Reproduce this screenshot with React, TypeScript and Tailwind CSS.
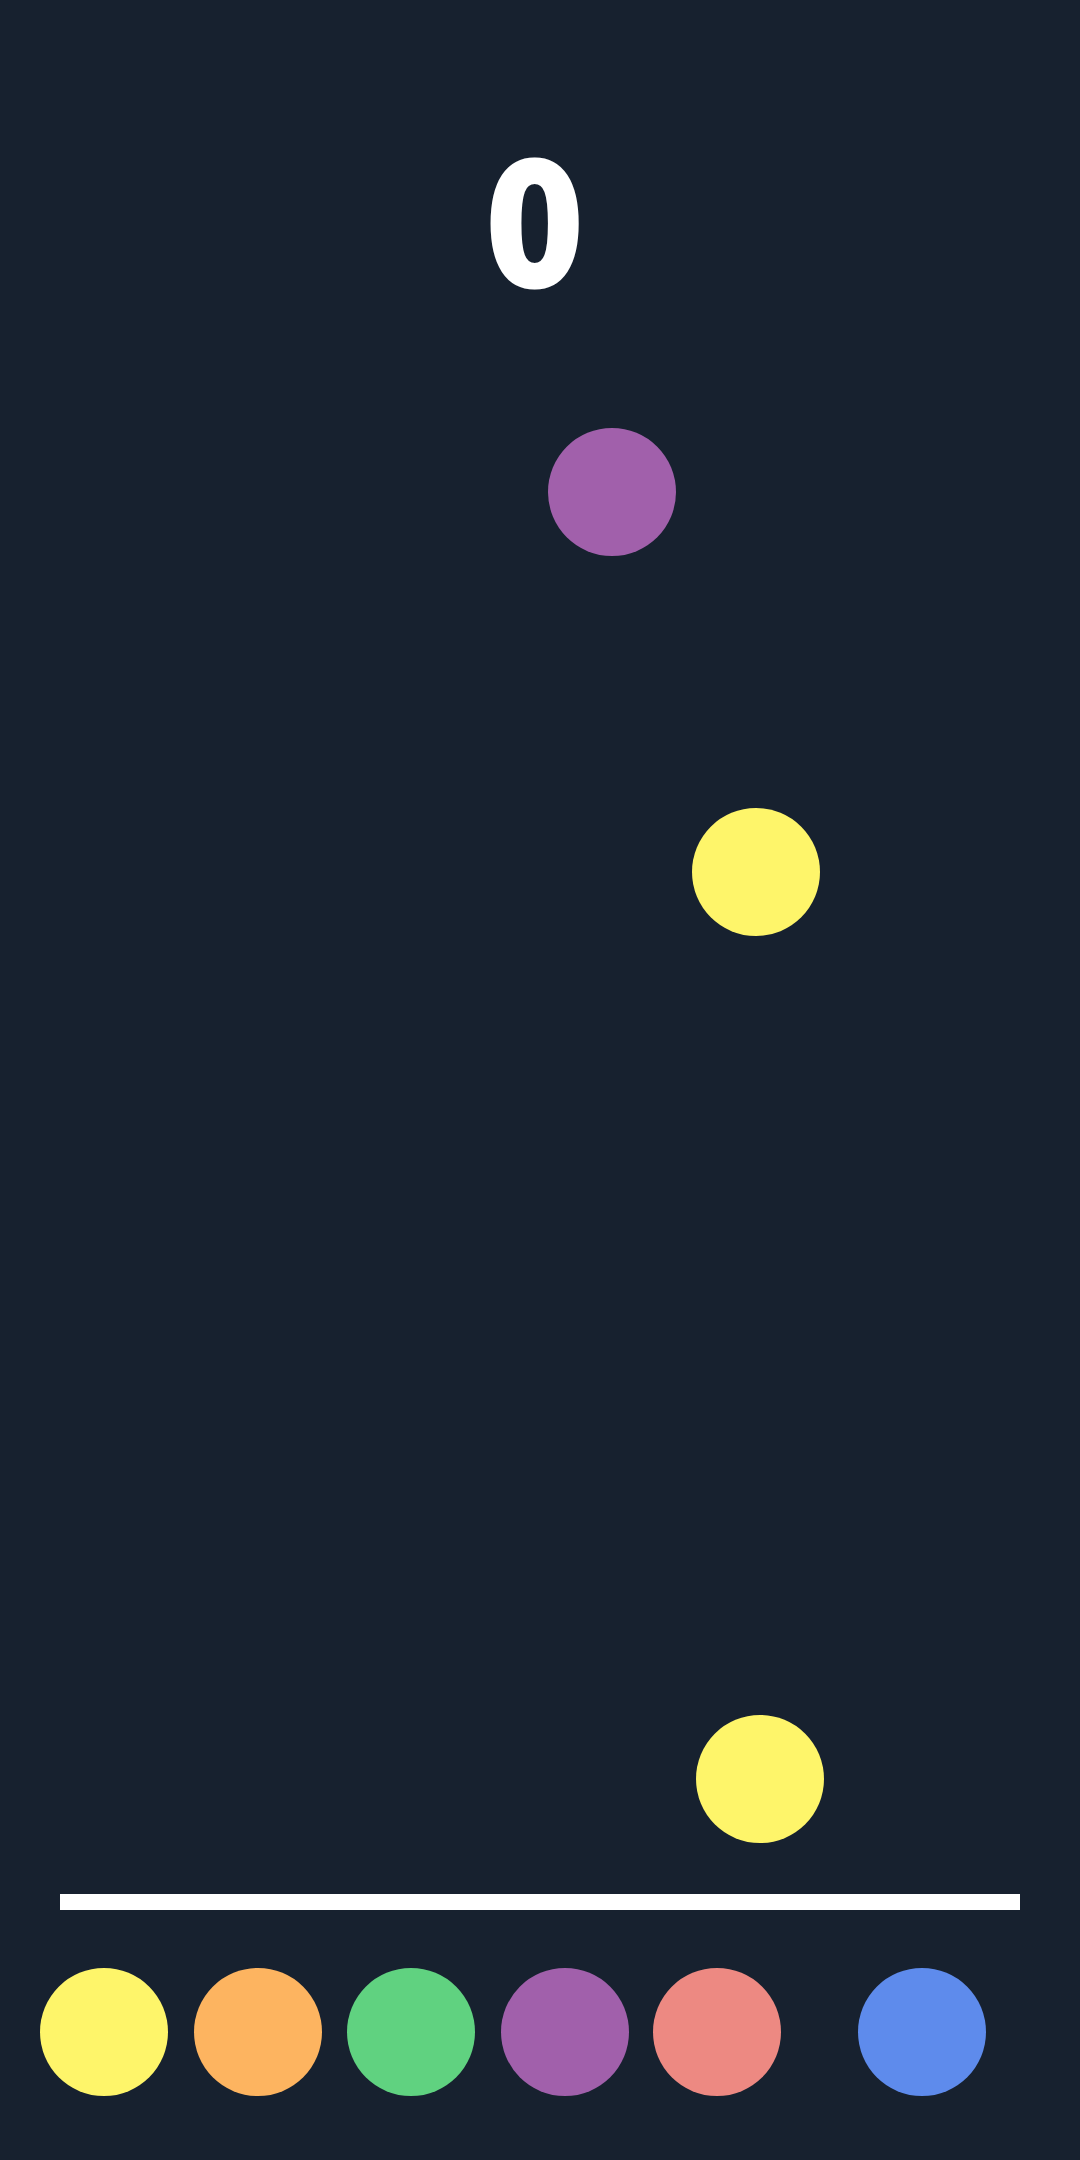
import React from "react";

const fallingBalls = [
  { id: 1, color: "bg-[#a160ab]", pos: "left-[548px] top-[428px]" },
  { id: 2, color: "bg-[#fef56a]", pos: "left-[692px] top-[808px]" },
  { id: 3, color: "bg-[#fef56a]", pos: "left-[696px] top-[1715px]" },
];

const buckets = [
  { id: "yellow", color: "bg-[#fef56a]", ml: "ml-[40px]" },
  { id: "orange", color: "bg-[#fdb460]", ml: "ml-[26px]" },
  { id: "green", color: "bg-[#60d280]", ml: "ml-[25px]" },
  { id: "purple", color: "bg-[#a160ab]", ml: "ml-[26px]" },
  { id: "red", color: "bg-[#ed8982]", ml: "ml-[24px]" },
  { id: "blue", color: "bg-[#5e8bec]", ml: "ml-[77px]" },
];

const App = () => {
  const score = 0;

  return (
    <div className="relative w-full h-[2160px] bg-[#17212f] flex flex-col overflow-hidden">
      {/* score */}
      <div className="pt-[143px] pr-[10px] flex justify-center">
        <span className="inline-block scale-x-[0.92] text-white font-bold text-[168px] leading-none font-['DejaVu_Sans_Condensed',sans-serif] [-webkit-text-stroke:5px_white]">
          {score}
        </span>
      </div>

      {/* play field */}
      <div className="flex-1" />

      {fallingBalls.map((ball) => (
        <div
          key={ball.id}
          className={`absolute w-[128px] h-[128px] rounded-full ${ball.color} ${ball.pos}`}
        />
      ))}

      {/* ground line */}
      <div className="mx-[60px] h-4 bg-white" />

      {/* color buckets */}
      <div className="flex mt-[58px] mb-[64px]">
        {buckets.map((b) => (
          <button
            key={b.id}
            className={`w-[128px] h-[128px] rounded-full shrink-0 ${b.color} ${b.ml}`}
          />
        ))}
      </div>
    </div>
  );
};

export default App;
